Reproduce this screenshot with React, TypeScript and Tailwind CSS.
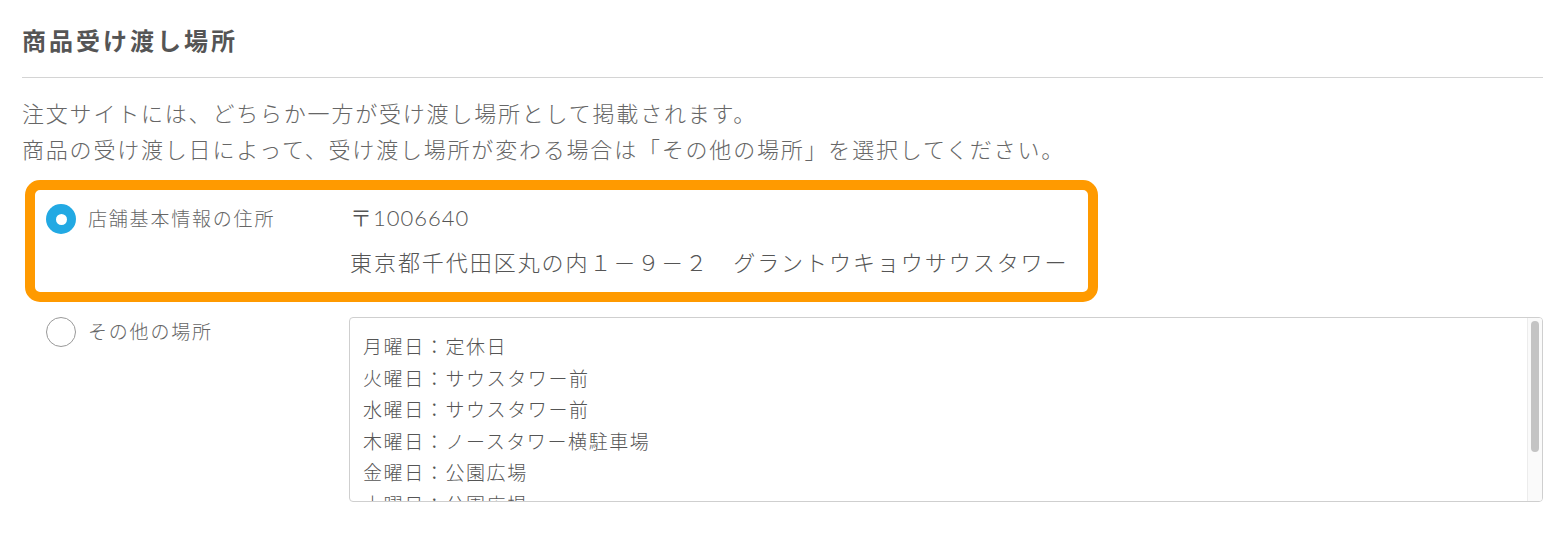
const SCHEDULE = [
  "月曜日：定休日",
  "火曜日：サウスタワー前",
  "水曜日：サウスタワー前",
  "木曜日：ノースタワー横駐車場",
  "金曜日：公園広場",
  "土曜日：公園広場",
  "日曜日：定休日",
];

function Radio({ checked }: { checked?: boolean }) {
  if (checked) {
    return (
      <span className="flex h-[30px] w-[30px] shrink-0 items-center justify-center rounded-full bg-[#22a9e3]">
        <span className="h-[11px] w-[11px] rounded-full bg-white" />
      </span>
    );
  }
  return <span className="h-[30px] w-[30px] shrink-0 rounded-full border border-[#999] bg-white" />;
}

export default function App() {
  return (
    <div className="min-h-[536px] bg-white pl-[22px] pr-[23px] font-['Lato','Noto_Sans_CJK_JP',sans-serif] font-light text-[#666]">
      <div className="h-[78px] border-b border-[#d4d4d4] pt-[24px]">
        <h2 className="text-[24px] font-bold leading-[34px] tracking-[3px] text-[#555]">商品受け渡し場所</h2>
      </div>

      <div className="mt-[18px] text-[22px] leading-[36px] tracking-[1.8px]">
        <p>注文サイトには、どちらか一方が受け渡し場所として掲載されます。</p>
        <p>商品の受け渡し日によって、受け渡し場所が変わる場合は「その他の場所」を選択してください。</p>
      </div>

      <div className="ml-[3px] mt-[12px] w-[1073px] rounded-[15px] border-[10px] border-[#ff9a00] pb-[13px] pl-[11px] pt-[12px]">
        <div className="flex items-start">
          <div className="flex w-[304px] items-center gap-[12px] pt-[1px]">
            <Radio checked />
            <span className="text-[19px] leading-[32px] tracking-[1.8px] text-[#666]">店舗基本情報の住所</span>
          </div>
          <div className="text-[#555]">
            <div className="text-[22px] leading-[32px] tracking-[1px]">〒1006640</div>
            <div className="mt-[13px] text-[22px] leading-[32px] tracking-[1.95px]">
              東京都千代田区丸の内１－９－２　グラントウキョウサウスタワー
            </div>
          </div>
        </div>
      </div>

      <div className="mt-[15px] flex items-start pl-[24px]">
        <div className="flex w-[303px] items-center gap-[12px]">
          <Radio />
          <span className="text-[19px] leading-[30px] tracking-[1.8px]">その他の場所</span>
        </div>
        <div className="flex h-[185px] flex-1 overflow-hidden rounded-[4px] border border-[#cfcfcf]">
          <div className="flex-1 overflow-hidden pl-[13px] pt-[13px] text-[19px] leading-[31.6px] tracking-[1.6px] text-[#555]">
            {SCHEDULE.map((line) => (
              <div key={line}>{line}</div>
            ))}
          </div>
          <div className="w-[15px] border-l border-[#ececec] bg-[#fafafa] px-[3px] pt-[3px]">
            <div className="h-[131px] rounded-full bg-[#c4c4c4]" />
          </div>
        </div>
      </div>
    </div>
  );
}
